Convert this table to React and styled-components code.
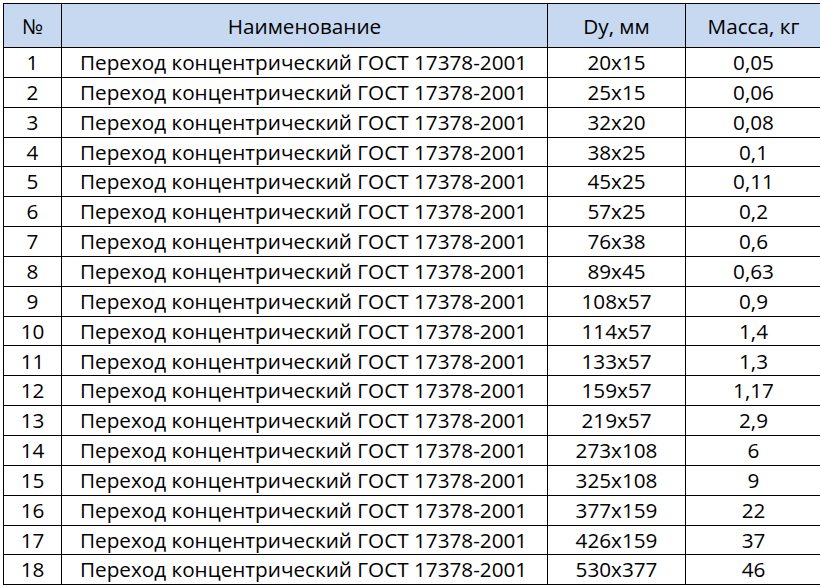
import styled, { createGlobalStyle } from "styled-components";

const GlobalStyle = createGlobalStyle`
  html, body {
    margin: 0;
    background: #ffffff;
  }
  body {
    padding: 3px;
    font-family: "Open Sans", "Noto Sans", sans-serif;
  }
`;

const rows = [
	["20x15", "0,05"],
	["25x15", "0,06"],
	["32x20", "0,08"],
	["38x25", "0,1"],
	["45x25", "0,11"],
	["57x25", "0,2"],
	["76x38", "0,6"],
	["89x45", "0,63"],
	["108x57", "0,9"],
	["114x57", "1,4"],
	["133x57", "1,3"],
	["159x57", "1,17"],
	["219x57", "2,9"],
	["273x108", "6"],
	["325x108", "9"],
	["377x159", "22"],
	["426x159", "37"],
	["530x377", "46"],
];

const Table = styled.table`
	border-collapse: collapse;
	width: 815px;
	table-layout: fixed;
	font-size: 20.7px;
	color: #000;
	border: 1px solid #000;
`;

const HeadCell = styled.th`
	height: 43px;
	padding: 0;
	background: #c6d9f1;
	font-weight: 400;
	text-align: center;
	border: 1px solid #000;
	width: ${(p) => p.$w}px;
`;

const Row = styled.tr`
	height: 29.85px;
`;

const Cell = styled.td`
	padding: 0;
	line-height: 1;
	border: 1px solid #000;
	text-align: ${(p) => (p.$left ? "left" : "center")};
	padding-left: ${(p) => (p.$left ? "18px" : "0")};
	white-space: nowrap;
`;

const App = () => {
	return (
		<>
			<GlobalStyle />
			<Table>
				<thead>
					<tr>
						<HeadCell $w={57}>№</HeadCell>
						<HeadCell $w={485}>Наименование</HeadCell>
						<HeadCell $w={137}>Dy, мм</HeadCell>
						<HeadCell $w={135}>Масса, кг</HeadCell>
					</tr>
				</thead>
				<tbody>
					{rows.map(([dy, mass], i) => (
						<Row key={i}>
							<Cell>{i + 1}</Cell>
							<Cell $left>Переход концентрический ГОСТ 17378-2001</Cell>
							<Cell>{dy}</Cell>
							<Cell>{mass}</Cell>
						</Row>
					))}
				</tbody>
			</Table>
		</>
	);
};

export default App;
